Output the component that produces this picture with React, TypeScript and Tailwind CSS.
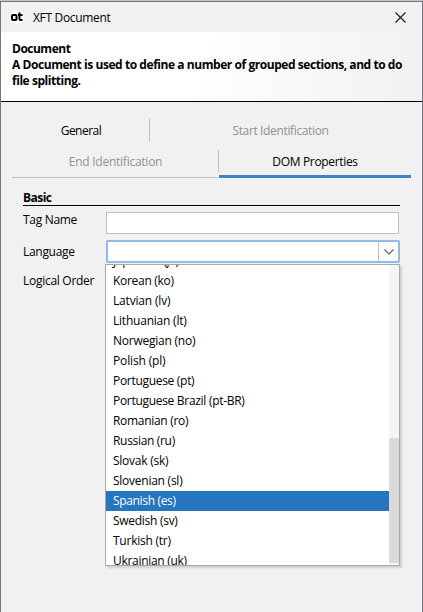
import React from "react";

const languages = [
  { name: "Japanese (ja)", track: "tracking-[-0.35px]" },
  { name: "Korean (ko)", track: "tracking-[-0.3px]" },
  { name: "Latvian (lv)", track: "tracking-[-0.18px]" },
  { name: "Lithuanian (lt)", track: "tracking-[-0.22px]" },
  { name: "Norwegian (no)", track: "tracking-[-0.24px]" },
  { name: "Polish (pl)", track: "tracking-[-0.15px]" },
  { name: "Portuguese (pt)", track: "tracking-[-0.3px]" },
  { name: "Portuguese Brazil (pt-BR)", track: "tracking-[-0.3px]" },
  { name: "Romanian (ro)", track: "tracking-[-0.3px]" },
  { name: "Russian (ru)", track: "tracking-[-0.32px]" },
  { name: "Slovak (sk)", track: "tracking-[-0.25px]" },
  { name: "Slovenian (sl)", track: "tracking-[-0.25px]" },
  { name: "Spanish (es)", track: "tracking-[-0.34px]" },
  { name: "Swedish (sv)", track: "tracking-[-0.28px]" },
  { name: "Turkish (tr)", track: "tracking-[-0.24px]" },
  { name: "Ukrainian (uk)", track: "tracking-[-0.3px]" },
];

function TitleBar() {
  return (
    <div className="flex h-[30px] shrink-0 items-center bg-[#f1f1f1] pl-[9px] pr-[16px]">
      <div className="flex size-[14px] items-center justify-center rounded-full bg-white">
        <svg width="14" height="14" viewBox="0 0 14 14" fill="none" stroke="#000" strokeWidth="2">
          <rect x="2" y="5" width="4.5" height="5" rx="1" />
          <path d="M9.5 2.5v6.5q0 1 1 1H12.5M8 5H12.5" />
        </svg>
      </div>
      <span className="ml-[9px] whitespace-nowrap pt-px tracking-[-0.32px]">XFT Document</span>
      <svg className="ml-auto" width="11" height="11" viewBox="0 0 11 11" stroke="#1a1a1a" strokeWidth="1.1">
        <path d="M.5.5l10 10M10.5.5l-10 10" />
      </svg>
    </div>
  );
}

function Banner() {
  return (
    <div className="h-[70px] shrink-0 whitespace-nowrap border-b border-black bg-[linear-gradient(105deg,#fff_47%,#f1f1f1_98%)] pl-[11px] pt-[9px] font-bold leading-[16px]">
      <div className="tracking-[-0.5px]">Document</div>
      <div className="tracking-[-0.44px]">A Document is used to define a number of grouped sections, and to do</div>
      <div className="tracking-[-0.45px]">file splitting.</div>
    </div>
  );
}

function Tabs() {
  return (
    <div className="mx-[11px] mt-[12px] shrink-0 whitespace-nowrap">
      <div className="flex h-[32px] items-center">
        <div className="w-[137px] pl-[1px] pt-px text-center tracking-[-0.5px]">General</div>
        <div className="h-[22px] w-px bg-[#c0c0c0]" />
        <div className="flex-1 pt-px text-center tracking-[-0.36px] text-[#929292]">Start Identification</div>
      </div>
      <div className="flex h-[32px]">
        <div className="flex w-[206px] items-center justify-center border-b border-[#c0c0c0] pl-px pt-px tracking-[-0.25px] text-[#929292]">End Identification</div>
        <div className="mt-[4px] h-[22px] w-px bg-[#c0c0c0]" />
        <div className="flex flex-1 items-center justify-center border-b-[3px] border-[#4081c7] pt-[3px] tracking-[-0.33px]">DOM Properties</div>
      </div>
    </div>
  );
}

function LanguageList() {
  return (
    <div className="absolute -left-px top-[24px] flex h-[302px] w-[295px] overflow-hidden border border-[#a8a8a8] bg-white shadow-[2px_2px_2px_rgba(0,0,0,0.14)]">
      <div className="-mt-[14px] flex-1">
        {languages.map(({ name, track }) => (
          <div
            key={name}
            className={`h-[20px] whitespace-nowrap pl-[7px] leading-[20px] ${track} ${name === "Spanish (es)" ? "bg-[#2675bf] text-white" : ""}`}
          >
            {name}
          </div>
        ))}
      </div>
      <div className="w-[10px] bg-[#f5f5f5] pt-[173px]">
        <div className="h-[125px] bg-[#dadada]" />
      </div>
    </div>
  );
}

export default function App() {
  return (
    <div className="flex h-[612px] w-[423px] flex-col overflow-hidden border-t border-[#bdc8ce] font-['Open_Sans','Noto_Sans',sans-serif] text-[12px] text-black">
      <div className="flex flex-1 flex-col border-x border-t border-[#737779] bg-[#f1f1f1]">
        <TitleBar />
        <Banner />
        <Tabs />
        <div className="ml-[22px] mt-[12px] h-[16px] w-[377px] border-b border-black font-bold leading-[16px]">
          <span className="tracking-[-0.55px]">Basic</span>
        </div>
        <div className="ml-[22px] mt-[6px] flex">
          <div className="w-[83px] whitespace-nowrap leading-[16px]">
            <div className="tracking-[-0.3px]">Tag Name</div>
            <div className="mt-[16px] tracking-[-0.3px]">Language</div>
            <div className="mt-[13px] tracking-[-0.28px]">Logical Order</div>
          </div>
          <div>
            <div className="h-[22px] w-[293px] border border-[#c0c0c0] bg-white" />
            <div className="relative mt-[6px]">
              <div className="flex h-[23px] w-[294px] rounded-[2px] border-2 border-[#8fbbe6] bg-white">
                <div className="flex-1" />
                <div className="flex w-[20px] items-center justify-center border-l border-[#c0c0c0] bg-[#fbfbfb]">
                  <svg width="10" height="6" viewBox="0 0 10 6" fill="none" stroke="#666" strokeWidth="1.2">
                    <path d="M.5.5L5 5L9.5.5" />
                  </svg>
                </div>
              </div>
              <LanguageList />
            </div>
          </div>
        </div>
      </div>
    </div>
  );
}
